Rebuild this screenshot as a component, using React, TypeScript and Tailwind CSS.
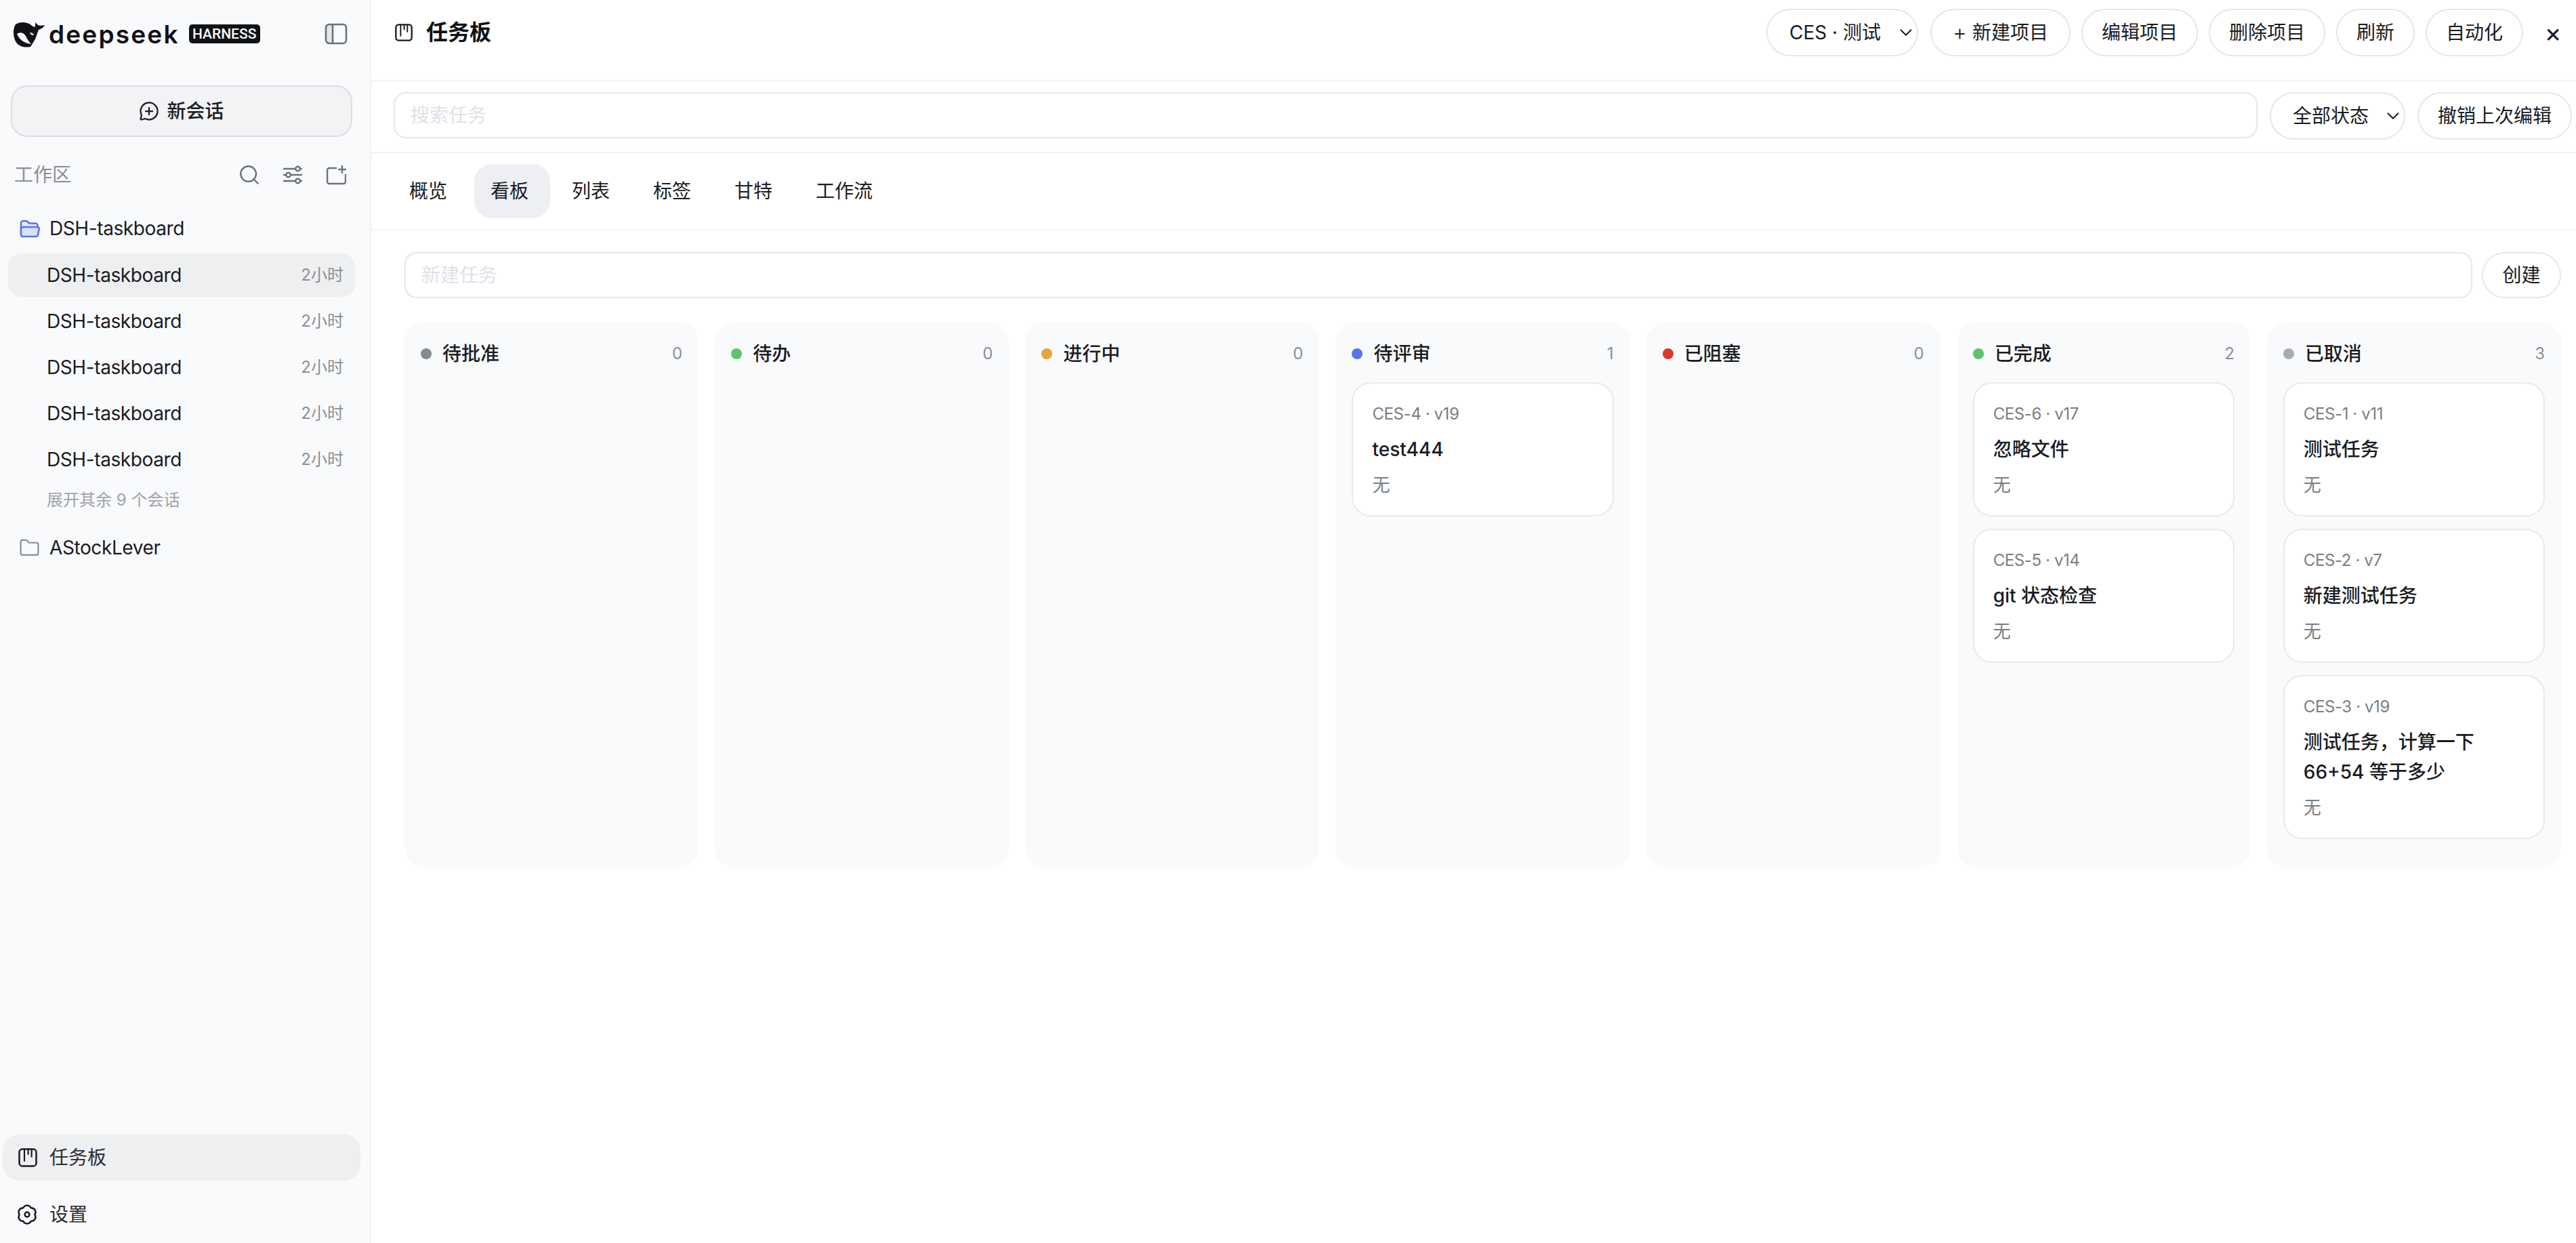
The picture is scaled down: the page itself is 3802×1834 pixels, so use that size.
import { ChevronDown, Folder, MessageCirclePlus, Search } from "lucide-react";

const sessions = ["DSH-taskboard", "DSH-taskboard", "DSH-taskboard", "DSH-taskboard", "DSH-taskboard"];
const tabs = ["概览", "看板", "列表", "标签", "甘特", "工作流"];

type Task = { meta: string; title: string };
type Column = { name: string; dot: string; tasks: Task[] };

const columns: Column[] = [
  { name: "待批准", dot: "bg-[#868991]", tasks: [] },
  { name: "待办", dot: "bg-[#5cc46c]", tasks: [] },
  { name: "进行中", dot: "bg-[#e9a437]", tasks: [] },
  { name: "待评审", dot: "bg-[#5478e6]", tasks: [{ meta: "CES-4 · v19", title: "test444" }] },
  { name: "已阻塞", dot: "bg-[#d8392a]", tasks: [] },
  {
    name: "已完成",
    dot: "bg-[#5cc46c]",
    tasks: [
      { meta: "CES-6 · v17", title: "忽略文件" },
      { meta: "CES-5 · v14", title: "git 状态检查" },
    ],
  },
  {
    name: "已取消",
    dot: "bg-[#aaacb4]",
    tasks: [
      { meta: "CES-1 · v11", title: "测试任务" },
      { meta: "CES-2 · v7", title: "新建测试任务" },
      { meta: "CES-3 · v19", title: "测试任务，计算一下 66+54 等于多少" },
    ],
  },
];

function WhaleLogo() {
  return (
    <svg width="56" height="44" viewBox="0 0 56 44" className="flex-none">
      <path
        fill="#111216"
        d="M7 8C12 5 22 3 30 9C32 11 34 11 36 12L36 5L40 9C42 10 45 10 50 9C48 13 44 15 41 16C39 20 38 27 34 33L29 41C25 42 17 42 13 39C7 36 4 28 4 20C4 15 5 11 7 8Z"
      />
      <path fill="#f9fafc" d="M9 22C14 19 19 20 22 25C24 29 26 33 30 37C22 36 13 32 9 22Z" />
      <path fill="#f9fafc" d="M28 20C31 20 33 21 34 24C31 24 29 23 28 20Z" />
    </svg>
  );
}

function KanbanIcon({ size }: { size: number }) {
  return (
    <svg width={size} height={size} viewBox="0 0 24 24" fill="none" stroke="#1a1b1f" strokeWidth="2" strokeLinecap="round" className="flex-none">
      <rect x="2" y="2" width="20" height="20" rx="3.5" />
      <path d="M8 3v13M12.5 3v5M16.5 3v8" strokeWidth="1.7" />
    </svg>
  );
}

function SidebarToggleIcon() {
  return (
    <svg width="34" height="32" viewBox="0 0 34 32" fill="none" className="flex-none">
      <path d="M12 2H7a5 5 0 0 0-5 5v18a5 5 0 0 0 5 5h5z" fill="#e6e7ea" />
      <rect x="2" y="2" width="30" height="28" rx="5" stroke="#6e7178" strokeWidth="2.6" />
      <path d="M12 2v28" stroke="#6e7178" strokeWidth="2.6" />
    </svg>
  );
}

function SlidersIcon() {
  return (
    <svg width="30" height="30" viewBox="0 0 30 30" fill="none" stroke="#6e7178" strokeWidth="2.4" strokeLinecap="round" className="flex-none">
      <path d="M2 6h17M26 6h2M2 15h3M12 15h16M2 24h17M26 24h2" />
      <circle cx="22.5" cy="6" r="3.3" />
      <circle cx="8.5" cy="15" r="3.3" />
      <circle cx="22.5" cy="24" r="3.3" />
    </svg>
  );
}

function FolderPlusIcon() {
  return (
    <svg width="30" height="30" viewBox="0 0 30 30" fill="none" stroke="#6e7178" strokeWidth="2.4" strokeLinecap="round" className="flex-none">
      <path d="M15 5H5a3 3 0 0 0-3 3v17a3 3 0 0 0 3 3h21a3 3 0 0 0 3-3V15" />
      <path d="M24 2v10M19 7h10" />
    </svg>
  );
}

function OpenFolderIcon() {
  return (
    <svg width="30" height="27" viewBox="0 0 30 27" fill="none" stroke="#5578e6" strokeWidth="2.6" strokeLinejoin="round" className="flex-none">
      <path d="M2 22V5a3 3 0 0 1 3-3h5.5l3.5 3.5h9.5a3 3 0 0 1 3 3V11" fill="#e4e9fa" />
      <path d="M5 11h21.5a2.2 2.2 0 0 1 2.2 2.7l-1.9 9.3a2.6 2.6 0 0 1-2.6 2H4.4A2.4 2.4 0 0 1 2 22.6V14a3 3 0 0 1 3-3z" fill="#d9e0f8" />
    </svg>
  );
}

function GearIcon() {
  return (
    <svg width="32" height="32" viewBox="0 0 24 24" fill="none" stroke="#1a1b1f" strokeWidth="1.9" strokeLinejoin="round" className="flex-none">
      <path d="M7.75 4.64A4.7 4.7 0 0 1 16.25 4.64A4.7 4.7 0 0 1 20.5 12A4.7 4.7 0 0 1 16.25 19.36A4.7 4.7 0 0 1 7.75 19.36A4.7 4.7 0 0 1 3.5 12A4.7 4.7 0 0 1 7.75 4.64Z" />
      <circle cx="12" cy="12" r="2.6" />
    </svg>
  );
}

function Sidebar() {
  return (
    <aside className="flex h-full w-[548px] flex-none flex-col border-r-2 border-[#f0f1f3] bg-[#f9fafc]">
      <div className="flex h-[100px] flex-none items-center pl-[16px] pr-[33px]">
        <WhaleLogo />
        <span className="text-[37px] font-semibold leading-none tracking-[2.2px] text-[#111216]">deepseek</span>
        <span className="ml-[14px] flex h-[28px] w-[105px] items-center justify-center rounded-[5px] bg-[#111216] font-[Roboto,sans-serif] text-[21px] font-medium leading-none text-white">
          HARNESS
        </span>
        <span className="ml-auto">
          <SidebarToggleIcon />
        </span>
      </div>

      <button className="ml-[16px] mr-[26px] mt-[26px] flex h-[76px] flex-none items-center justify-center gap-[11px] rounded-[24px] border-2 border-[#dcdde0] bg-[#f2f3f5] text-[28px] font-medium text-[#1a1b1f]">
        <MessageCirclePlus size={30} strokeWidth={1.8} />
        新会话
      </button>

      <div className="mt-[32px] flex h-[48px] flex-none items-center justify-between pl-[21px] pr-[35px]">
        <span className="text-[28px] text-[#8a8d94]">工作区</span>
        <div className="flex items-center gap-[34px]">
          <Search size={34} strokeWidth={1.7} color="#6e7178" className="-mx-[2px]" />
          <SlidersIcon />
          <FolderPlusIcon />
        </div>
      </div>

      <div className="mt-[23px] flex h-[64px] flex-none items-center gap-[14px] pl-[28px] text-[28px] tracking-[-0.4px] text-[#1a1b1f]">
        <span className="flex w-[31px] justify-center">
          <OpenFolderIcon />
        </span>
        DSH-taskboard
      </div>

      <div className="ml-[12px] mr-[22px] mt-[5px] flex flex-none flex-col gap-[4px]">
        {sessions.map((name, index) => (
          <div
            key={index}
            className={`flex h-[64px] items-center justify-between rounded-[20px] pl-[57px] pr-[17px] ${index === 0 ? "bg-[#eeeff1]" : ""}`}
          >
            <span className="text-[28px] tracking-[-0.4px] text-[#1a1b1f]">{name}</span>
            <span className="text-[24px] text-[#8b8e95]">2小时</span>
          </div>
        ))}
      </div>

      <div className="mt-[12px] flex-none pl-[69px] text-[24px] leading-[32px] text-[#a0a3a9]">展开其余 9 个会话</div>

      <div className="mt-[22px] flex h-[64px] flex-none items-center gap-[14px] pl-[28px] text-[28px] tracking-[-0.4px] text-[#1a1b1f]">
        <span className="flex w-[31px] justify-center">
          <Folder size={35} strokeWidth={1.7} color="#8a8d94" />
        </span>
        AStockLever
      </div>

      <div className="mt-auto flex flex-none flex-col gap-[16px] pb-[8px] pl-[4px] pr-[14px] text-[28px] text-[#2a2b30]">
        <div className="flex h-[68px] items-center gap-[17px] rounded-[24px] bg-[#eeeff1] pl-[22px]">
          <KanbanIcon size={30} />
          任务板
        </div>
        <div className="flex h-[68px] items-center gap-[17px] pl-[20px]">
          <GearIcon />
          设置
        </div>
      </div>
    </aside>
  );
}

function PillButton({ children, className = "" }: { children: React.ReactNode; className?: string }) {
  return (
    <button className={`flex h-[70px] flex-none items-center justify-center rounded-full border-2 border-[#e6e7e9] bg-white text-[28px] text-[#1a1b1f] ${className}`}>
      {children}
    </button>
  );
}

function SelectPill({ label, className }: { label: string; className: string }) {
  return (
    <div className={`relative flex h-[70px] flex-none items-center rounded-full border-2 border-[#e6e7e9] bg-white pl-[32px] text-[28px] text-[#1a1b1f] ${className}`}>
      {label}
      <ChevronDown size={30} strokeWidth={1.6} className="absolute right-[1px] top-[18px]" />
    </div>
  );
}

function TaskCard({ task }: { task: Task }) {
  return (
    <div className="rounded-[28px] border-2 border-[#e8e9eb] bg-white px-[28px] pb-[24px] pt-[27px]">
      <div className="text-[24px] leading-[36px] tracking-[-0.4px] text-[#7a7d85]">{task.meta}</div>
      <div className="mt-[12px] text-[28px] font-medium leading-[44px] text-[#1a1b1f]">{task.title}</div>
      <div className="mt-[11px] text-[26px] leading-[40px] text-[#7a7d85]">无</div>
    </div>
  );
}

function BoardColumn({ column }: { column: Column }) {
  return (
    <div className="h-[804px] rounded-[28px] bg-[#f9fafc] px-[24px] pt-[26px]">
      <div className="mb-[22px] flex h-[40px] items-center">
        <span className={`h-[16px] w-[16px] rounded-full ${column.dot}`} />
        <span className="ml-[16px] text-[28px] font-medium text-[#1a1b1f]">{column.name}</span>
        <span className="ml-auto text-[24px] text-[#8b8e95]">{column.tasks.length}</span>
      </div>
      <div className="flex flex-col gap-[18px]">
        {column.tasks.map((task) => (
          <TaskCard key={task.meta} task={task} />
        ))}
      </div>
    </div>
  );
}

export default function App() {
  return (
    <div className="flex h-screen w-full overflow-hidden bg-white font-[Inter,'Noto_Sans_CJK_SC',sans-serif]">
      <Sidebar />
      <main className="flex min-w-0 flex-1 flex-col">
        <header className="flex h-[120px] flex-none items-start border-b-2 border-[#f3f4f5] pl-[34px] pr-[12px] pt-[13px]">
          <div className="flex h-[70px] items-center gap-[19px]">
            <KanbanIcon size={28} />
            <h1 className="text-[32px] font-semibold text-[#111216]">任务板</h1>
          </div>
          <div className="ml-auto flex items-center gap-[16px]">
            <SelectPill label="CES · 测试" className="mr-[2px] w-[224px]" />
            <PillButton className="w-[207px]">
              <span className="mr-[8px] text-[32px] font-light leading-none">+</span>
              新建项目
            </PillButton>
            <PillButton className="w-[172px]">编辑项目</PillButton>
            <PillButton className="w-[172px]">删除项目</PillButton>
            <PillButton className="w-[116px]">刷新</PillButton>
            <PillButton className="w-[144px]">自动化</PillButton>
          </div>
          <button className="ml-[22px] flex h-[70px] w-[44px] items-center justify-center text-[38px] leading-none text-[#1a1b1f]">×</button>
        </header>

        <div className="flex h-[106px] flex-none items-start gap-[18px] border-b-2 border-[#f3f4f5] pl-[33px] pr-[6px] pt-[16px]">
          <input
            placeholder="搜索任务"
            className="h-[68px] min-w-0 flex-1 rounded-[18px] border-2 border-[#e6e7e9] bg-white px-[23px] text-[28px] outline-none placeholder:text-[#dfe1e9]"
          />
          <SelectPill label="全部状态" className="w-[200px]" />
          <PillButton className="w-[228px]">撤销上次编辑</PillButton>
        </div>

        <nav className="flex h-[114px] flex-none items-start gap-[8px] border-b-2 border-[#f3f4f5] pl-[32px] pt-[16px]">
          {tabs.map((tab) => (
            <button
              key={tab}
              className={`flex h-[80px] items-center rounded-[26px] pl-[24px] pr-[32px] text-[28px] text-[#1a1b1f] ${tab === "看板" ? "bg-[#eeeff2]" : ""}`}
            >
              {tab}
            </button>
          ))}
        </nav>

        <section className="flex-1 pl-[49px] pr-[22px] pt-[32px]">
          <div className="flex gap-[14px]">
            <input
              placeholder="新建任务"
              className="h-[68px] min-w-0 flex-1 rounded-[18px] border-2 border-[#e6e7e9] bg-white px-[23px] text-[28px] outline-none placeholder:text-[#dfe1e9]"
            />
            <PillButton className="!h-[68px] w-[117px]">创建</PillButton>
          </div>
          <div className="mt-[36px] grid grid-cols-7 gap-[24px]">
            {columns.map((column) => (
              <BoardColumn key={column.name} column={column} />
            ))}
          </div>
        </section>
      </main>
    </div>
  );
}
